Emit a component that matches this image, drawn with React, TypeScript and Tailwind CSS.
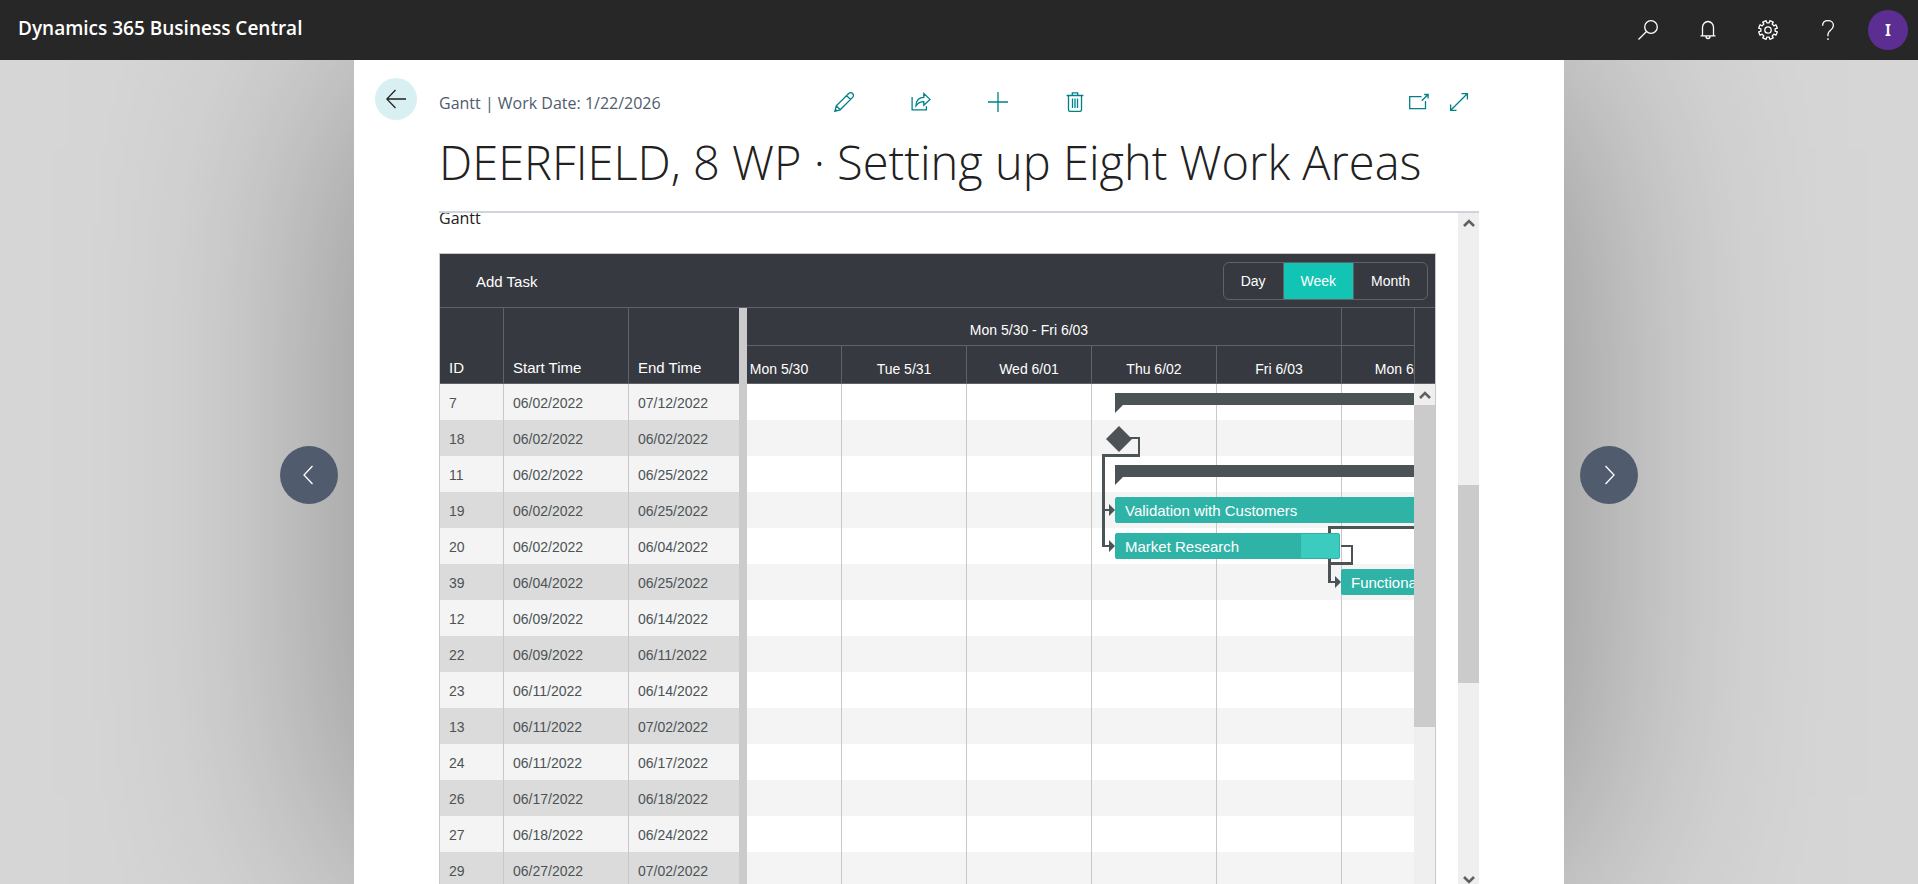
import React from "react";
import clsx from "clsx";

type Task = { id: number; start: string; end: string };

const tasks: Task[] = [
  { id: 7, start: "06/02/2022", end: "07/12/2022" },
  { id: 18, start: "06/02/2022", end: "06/02/2022" },
  { id: 11, start: "06/02/2022", end: "06/25/2022" },
  { id: 19, start: "06/02/2022", end: "06/25/2022" },
  { id: 20, start: "06/02/2022", end: "06/04/2022" },
  { id: 39, start: "06/04/2022", end: "06/25/2022" },
  { id: 12, start: "06/09/2022", end: "06/14/2022" },
  { id: 22, start: "06/09/2022", end: "06/11/2022" },
  { id: 23, start: "06/11/2022", end: "06/14/2022" },
  { id: 13, start: "06/11/2022", end: "07/02/2022" },
  { id: 24, start: "06/11/2022", end: "06/17/2022" },
  { id: 26, start: "06/17/2022", end: "06/18/2022" },
  { id: 27, start: "06/18/2022", end: "06/24/2022" },
  { id: 29, start: "06/27/2022", end: "07/02/2022" },
];

const weeks = [
  { label: "Mon 5/30 - Fri 6/03", days: ["Mon 5/30", "Tue 5/31", "Wed 6/01", "Thu 6/02", "Fri 6/03"] },
  { label: "Mon 6/06 - Fri 6/10", days: ["Mon 6/06", "Tue 6/07", "Wed 6/08", "Thu 6/09", "Fri 6/10"] },
];

const views = ["Day", "Week", "Month"];

const gearPoints = Array.from({ length: 8 })
  .flatMap((_, i) =>
    [
      [-13, 7.2],
      [-11, 9.5],
      [11, 9.5],
      [13, 7.2],
    ].map(([deg, r]) => {
      const a = ((i * 45 + 22.5 + deg) * Math.PI) / 180;
      return `${(10 + r * Math.cos(a)).toFixed(2)},${(10 + r * Math.sin(a)).toFixed(2)}`;
    })
  )
  .join(" ");

const Icon = ({ children, className }: { children: React.ReactNode; className?: string }) => (
  <svg
    viewBox="0 0 20 20"
    className={clsx("size-5 fill-none stroke-current", className)}
    strokeWidth="1.3"
    aria-hidden="true"
  >
    {children}
  </svg>
);

const SearchIcon = () => (
  <Icon>
    <circle cx="13" cy="7" r="6.3" />
    <path d="M8.5 11.5 .5 19.5" />
  </Icon>
);

const BellIcon = () => (
  <Icon>
    <path d="M4.5 15.8V7.5a5.5 6 0 0 1 11 0v8.3M2.5 15.8h15M8 16.2a2 2.3 0 0 0 4 0" />
  </Icon>
);

const GearIcon = () => (
  <Icon>
    <polygon points={gearPoints} strokeLinejoin="round" />
    <circle cx="10" cy="10" r="3.2" />
  </Icon>
);

const HelpIcon = () => (
  <Icon>
    <path d="M4.6 5.8C4.6 2.6 6.9.7 10 .7s5.4 1.9 5.4 4.8c0 4.3-5.4 4.9-5.4 8.6v2.1M10 18.2V20" />
  </Icon>
);

const PencilIcon = () => (
  <Icon>
    <path d="M.8 19.3 2.3 13.9 14.7 1.5a2.6 2.6 0 0 1 3.9 3.9L6.2 17.8zM2.3 13.9l3.9 3.9M12.6 3.6l3.9 3.9M1.3 17.2l1.7 1.7" />
  </Icon>
);

const ShareIcon = () => (
  <Icon>
    <path d="M1.1 5v12.9h14.3v-3.6" />
    <path d="M5 13.9C5 8.4 8 5.3 12.8 5.3V1.5L19 7.4l-6.2 5.9V9.7c-3.5 0-5.8 1.2-7.8 4.2z" />
  </Icon>
);

const PlusIcon = () => (
  <Icon>
    <path d="M10 0v20M0 10h20" />
  </Icon>
);

const TrashIcon = () => (
  <Icon>
    <path d="M1.6 3.5h16.8M3.5 3.5v14.2c0 1 .7 1.7 1.7 1.7h9.6c1 0 1.7-.7 1.7-1.7V3.5M7.3 3.5V.8h5.4v2.7M7.5 6.5V16M10 6.5V16M12.5 6.5V16" />
  </Icon>
);

const PopOutIcon = () => (
  <Icon>
    <path d="M12.5 4.7H.7v12h15.8V9M12.8 8.7l6-6M15.2 2.5h3.9v3.9" />
  </Icon>
);

const ExpandIcon = () => (
  <Icon>
    <path d="M1.7 18.3 18.3 1.7M12.5 1.6h5.9v5.9M1.6 12.5v5.9h5.9" />
  </Icon>
);

const ScrollArrow = ({ down }: { down?: boolean }) => (
  <svg
    viewBox="0 0 12 8"
    className={clsx("h-2 w-3 fill-none stroke-[#606060]", down && "rotate-180")}
    strokeWidth="2.6"
    aria-hidden="true"
  >
    <path d="M1 7l5-5 5 5" />
  </svg>
);

const TopBar = () => {
  const buttons = [
    { label: "Search", icon: <SearchIcon /> },
    { label: "Notifications", icon: <BellIcon /> },
    { label: "Settings", icon: <GearIcon /> },
    { label: "Help", icon: <HelpIcon /> },
  ];

  return (
    <header className="relative z-10 flex h-[60px] shrink-0 items-center justify-between bg-[#272727] pl-[18px] text-white">
      <span className="pb-1 text-[19px] leading-6 font-semibold">Dynamics 365 Business Central</span>
      <div className="flex">
        {buttons.map(({ label, icon }) => (
          <button key={label} aria-label={label} className="flex h-[60px] w-[60px] items-center justify-center">
            {icon}
          </button>
        ))}
        <button aria-label="Account" className="flex h-[60px] w-[60px] items-center justify-center">
          <span className="flex size-10 items-center justify-center rounded-full bg-[#5c2e91] font-['Noto_Sans',sans-serif] text-base font-semibold">
            I
          </span>
        </button>
      </div>
    </header>
  );
};

const RecordButton = ({ label, d }: { label: string; d: string }) => (
  <button
    aria-label={label}
    className="relative z-10 flex size-[58px] items-center justify-center rounded-full bg-[#505c6d] text-white"
  >
    <Icon>
      <path d={d} />
    </Icon>
  </button>
);

const PageHeader = () => {
  const actions = [
    { label: "Edit", icon: <PencilIcon /> },
    { label: "Share", icon: <ShareIcon /> },
    { label: "New", icon: <PlusIcon /> },
    { label: "Delete", icon: <TrashIcon /> },
  ];

  return (
    <div className="grid grid-cols-[85px_minmax(0,1fr)_85px] pt-[18px]">
      <button
        aria-label="Back"
        className="ml-[21px] flex size-[42px] items-center justify-center rounded-full bg-[#d9f0f2] text-[#212121]"
      >
        <Icon>
          <path d="M20 10H1M9.5 1 .8 10l8.7 9" />
        </Icon>
      </button>
      <div className="grid grid-cols-[1fr_auto_1fr] items-center pt-1 text-[#008089]">
        <span className="pt-0.5 text-base text-[#505c6d]">Gantt | Work Date: 1/22/2026</span>
        <div className="flex">
          {actions.map(({ label, icon }) => (
            <button key={label} aria-label={label} className="flex h-10 w-[77px] items-center justify-center">
              {icon}
            </button>
          ))}
        </div>
        <div className="flex justify-end">
          <button aria-label="Open in new window" className="flex size-10 items-center justify-center">
            <PopOutIcon />
          </button>
          <button aria-label="Expand" className="flex size-10 items-center justify-center">
            <ExpandIcon />
          </button>
        </div>
      </div>
      <h1 className="col-start-2 flex h-[91px] items-center border-b-2 border-[#d0d3db] pb-2 text-[47px] font-light whitespace-nowrap text-[#212121]">
        DEERFIELD, 8 WP · Setting up Eight Work Areas
      </h1>
    </div>
  );
};

const TaskTable = () => (
  <table className="w-[299px] shrink-0 table-fixed border-separate border-spacing-0 self-start text-left">
    <colgroup>
      <col className="w-16" />
      <col className="w-[125px]" />
      <col className="w-[110px]" />
    </colgroup>
    <thead>
      <tr className="bg-[#373940] align-bottom text-[15px] text-white">
        {["ID", "Start Time", "End Time"].map((name) => (
          <th
            key={name}
            className="h-[76px] border-r border-b border-[#5f6269] px-[9px] pb-[5px] font-normal last:border-r-0"
          >
            {name}
          </th>
        ))}
      </tr>
    </thead>
    <tbody className="text-[#4c5356]">
      {tasks.map(({ id, start, end }) => (
        <tr key={id} className="bg-[#f4f4f4] even:bg-[#dbdbdb]">
          <td className="h-9 border-r border-[#c8c8c8] px-[9px] pt-0.5">{id}</td>
          <td className="border-r border-[#c8c8c8] px-[9px] pt-0.5">{start}</td>
          <td className="px-[9px] pt-0.5">{end}</td>
        </tr>
      ))}
    </tbody>
  </table>
);

const Links = () => (
  <svg
    viewBox="30 0 1250 252"
    className="absolute top-0 left-0 h-[252px] w-[1250px] fill-[#4c5356]"
    aria-hidden="true"
  >
    {/* summary tasks */}
    <path d="M398 9h900v12H406l-8 8z" />
    <path d="M398 81h900v12H406l-8 8z" />
    {/* milestone and its links */}
    <path d="M402 42l13 13-13 13-13-13z" />
    <path d="M413 53h10v2h-10zM421 53h2v20h-2zM385 70h38v3h-38zM385 70h3v93h-3zM388 125h5v2h-5zM388 161h5v2h-5z" />
    <path d="M392 120l6 6-6 6zM392 156l6 6-6 6z" />
    {/* links into Functional */}
    <path d="M611 142h687v3H611zM611 142h3v57h-3zM611 178h25v3h-25zM634 161h2v20h-2zM624 161h12v2h-12zM611 197h8v2h-8z" />
    <path d="M618 192l6 6-6 6z" />
  </svg>
);

const TaskBar = ({ className, children }: { className: string; children: React.ReactNode }) => (
  <div
    className={clsx(
      "absolute flex h-[26px] items-center overflow-hidden rounded-xs border border-[#2fb3a7] bg-[#2fb3a7] pt-px pl-[9px] text-[15px] whitespace-nowrap text-white",
      className
    )}
  >
    {children}
  </div>
);

const Timeline = () => (
  <div className="relative min-w-0 flex-1 overflow-hidden">
    {/* scrolled a little into the first day */}
    <div className="-ml-[30px] flex w-max">
      {weeks.map(({ label, days }) => (
        <div key={label}>
          <div className="flex h-[38px] items-center justify-center border-r border-b border-[#5f6269] bg-[#373940] pt-1.5 text-white">
            {label}
          </div>
          <div className="flex">
            {days.map((day) => (
              <div key={day} className="w-[125px]">
                <div className="flex h-[38px] items-center justify-center border-r border-b border-[#5f6269] bg-[#373940] pt-2 text-white">
                  {day}
                </div>
                {tasks.map(({ id }) => (
                  <div key={id} className="h-9 border-r border-[#c8c8c8] bg-white odd:bg-[#f4f4f4]" />
                ))}
              </div>
            ))}
          </div>
        </div>
      ))}
    </div>
    <div className="absolute top-[76px] left-0">
      <Links />
      <TaskBar className="top-[113px] left-[368px] w-[900px]">Validation with Customers</TaskBar>
      <TaskBar className="top-[149px] left-[368px] w-[225px]">
        Market Research
        <span className="absolute inset-y-0 right-0 w-[38px] bg-[#3ccbbf]" />
      </TaskBar>
      <TaskBar className="top-[185px] left-[594px] w-[675px]">Functional Specification</TaskBar>
    </div>
  </div>
);

const Gantt = () => {
  const [view, setView] = React.useState("Week");

  return (
    <div className="mr-[22px] border border-b-0 border-[#c8c8c8] font-['Liberation_Sans',Arial,sans-serif] text-sm">
      <div className="flex h-[54px] items-center justify-between border-b border-[#5f6269] bg-[#373940] pr-[7px] pl-9 text-white">
        <button className="pt-0.5 text-[15px]">Add Task</button>
        <div className="flex overflow-hidden rounded-md border border-[#5f6269]">
          {views.map((name) => (
            <button
              key={name}
              onClick={() => setView(name)}
              className={clsx(
                "h-9 border-r border-[#5f6269] px-[17px] last:border-r-0",
                name === view && "bg-[#12c4b3]"
              )}
            >
              {name}
            </button>
          ))}
        </div>
      </div>
      <div className="flex">
        <TaskTable />
        <div className="w-2 shrink-0 bg-[#cbcbcb]" />
        <Timeline />
        <div className="flex w-[21px] shrink-0 flex-col bg-[#efefef]">
          <div className="h-[76px] border-b border-l border-[#5f6269] bg-[#373940]" />
          <div className="flex h-[21px] items-center justify-center">
            <ScrollArrow />
          </div>
          <div className="h-[322px] bg-[#cbcbcb]" />
        </div>
      </div>
    </div>
  );
};

const App = () => {
  return (
    <div className="flex h-screen flex-col overflow-hidden bg-[#d6d6d6] font-['Open_Sans',sans-serif]">
      <TopBar />
      <div className="grid min-h-0 flex-1 grid-cols-[354px_minmax(0,1fr)_354px]">
        <div className="flex items-center justify-end pt-1.5 pr-4">
          <RecordButton label="Previous record" d="M13.5 1 5 10l8.5 9" />
        </div>
        <main className="flex min-h-0 flex-col bg-white shadow-[0_0_250px_rgba(0,0,0,0.38)]">
          <PageHeader />
          <div className="mx-[85px] flex min-h-0 flex-1">
            <div className="min-w-0 flex-1 overflow-hidden">
              <h2 className="-mt-[7px] mb-[23px] text-base text-[#212121]">Gantt</h2>
              <Gantt />
            </div>
            <div className="flex w-[21px] flex-col items-center bg-[#efefef]">
              <div className="flex h-5 items-center">
                <ScrollArrow />
              </div>
              <div className="mt-[252px] h-[198px] w-full bg-[#cbcbcb]" />
              <div className="mt-auto flex h-2 items-start">
                <ScrollArrow down />
              </div>
            </div>
          </div>
        </main>
        <div className="flex items-center pt-1.5 pl-4">
          <RecordButton label="Next record" d="M6.5 1 15 10l-8.5 9" />
        </div>
      </div>
    </div>
  );
};

export default App;
